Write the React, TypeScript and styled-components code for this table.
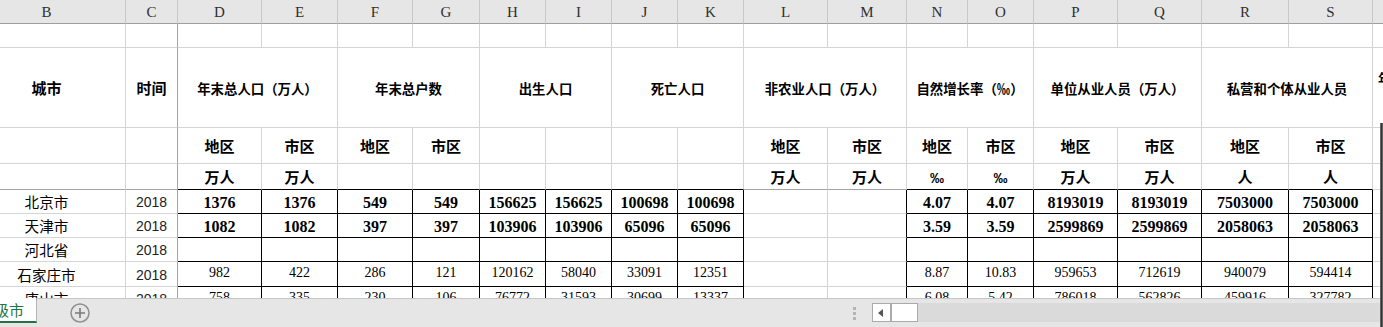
import styled, { createGlobalStyle, css } from 'styled-components';

const GlobalStyle = createGlobalStyle`
  html, body { margin: 0; padding: 0; background: #fff; overflow: hidden; }
  #root { width: 1383px; height: 327px; }
`;

// column widths B..T, column B is scrolled partly out of view
const COLS = [158, 52, 84, 76, 75, 67, 66, 66, 66, 66, 84, 79, 61, 66, 84, 84, 87, 84, 80];
const LETTERS = ['B', 'C', 'D', 'E', 'F', 'G', 'H', 'I', 'J', 'K', 'L', 'M', 'N', 'O', 'P', 'Q', 'R', 'S', 'T'];
const ROWS = [24, 80, 36, 26, 24, 24, 24, 25, 24];

type Edge = 'grid' | 'line' | 'freeze';
type Kind = 'plain' | 'title' | 'group' | 'sub' | 'unit' | 'city' | 'year' | 'bold' | 'num' | 'corner';

const edgeColor: Record<Edge, string> = { grid: '#d4d4d4', line: '#000', freeze: '#a3a3a3' };

const cjk = `"Noto Sans CJK SC", sans-serif`;
const serif = `"Liberation Serif", "Times New Roman", serif`;

const kinds: Record<Kind, ReturnType<typeof css>> = {
  plain: css``,
  title: css`font: 700 15px ${cjk};`,
  group: css`font: 700 13.4px ${cjk};`,
  sub: css`font: 700 15px ${cjk};`,
  unit: css`font: 700 14px "Liberation Sans", Arial, sans-serif; padding-top: 2px;`,
  city: css`font: 400 14.6px ${cjk};`,
  year: css`font: 400 14px "Liberation Sans", Arial, sans-serif; color: #222; padding-top: 1px;`,
  bold: css`font: 700 16px ${serif}; padding-top: 3px;`,
  num: css`font: 400 14px ${serif}; padding-bottom: 2px;`,
  corner: css`font: 700 13.4px ${cjk}; justify-content: flex-start; align-items: flex-start; padding: 20px 0 0 5px;`,
};

type CellDef = { text?: string; span?: number; kind?: Kind };

const Root = styled.div`
  position: relative;
  width: 1383px;
  height: 327px;
  display: flex;
  flex-direction: column;
  overflow: hidden;
  background: #fff;
`;

const SheetArea = styled.div`
  height: 298px;
  overflow: hidden;
`;

const Sheet = styled.div`
  margin-left: -32px;
  display: grid;
  grid-template-columns: ${COLS.map((w) => `${w}px`).join(' ')};
  grid-template-rows: 24px ${ROWS.map((h) => `${h}px`).join(' ')};
`;

const ColumnLabel = styled.div`
  box-sizing: border-box;
  background: #e6e6e6;
  border-right: 1px solid #c8c8c8;
  border-bottom: 1px solid #9e9e9e;
  display: flex;
  align-items: center;
  justify-content: center;
  padding-top: 2px;
  font: 400 15px ${serif};
  color: #2f2f2f;
`;

const Cell = styled.div<{ $right: Edge; $bottom: Edge; $span: number; $kind: Kind }>`
  box-sizing: border-box;
  grid-column: span ${(p) => p.$span};
  border-right: 1px solid ${(p) => edgeColor[p.$right]};
  border-bottom: 1px solid ${(p) => edgeColor[p.$bottom]};
  display: flex;
  align-items: center;
  justify-content: center;
  white-space: nowrap;
  overflow: hidden;
  color: #000;
  ${(p) => kinds[p.$kind]}
`;

const TabBar = styled.div`
  box-sizing: border-box;
  height: 29px;
  background: #e6e6e6;
  border-top: 1px solid #c6c6c6;
  display: flex;
  align-items: flex-start;
`;

const SheetTab = styled.div`
  box-sizing: border-box;
  width: 37px;
  height: 25px;
  margin-top: -1px;
  background: #fff;
  border-right: 1px solid #b4b4b4;
  border-bottom: 2px solid #217346;
  overflow: hidden;
  display: flex;
  align-items: center;
`;

const TabLabel = styled.span`
  margin-left: -6px;
  font: 400 15px ${cjk};
  color: #217346;
  white-space: nowrap;
`;

const AddSheet = styled.div`
  margin: 4px 0 0 33px;
  width: 20px;
  height: 20px;
`;

const ScrollArea = styled.div`
  margin-left: auto;
  width: 530px;
  display: flex;
  align-items: flex-start;
`;

const Grip = styled.div`
  margin-top: 8px;
  width: 3px;
  display: flex;
  flex-direction: column;
  gap: 2px;
  span { display: block; width: 3px; height: 3px; background: #b4b4b4; }
`;

const HScroll = styled.div`
  margin: 4px 0 0 16px;
  flex: 1;
  height: 19px;
  display: flex;
  background: #dadada;
`;

const ScrollButton = styled.div<{ $width: number }>`
  box-sizing: border-box;
  width: ${(p) => p.$width}px;
  height: 19px;
  background: #fff;
  border: 1px solid #ababab;
  display: flex;
  align-items: center;
  justify-content: center;
`;

const LeftArrow = styled.span`
  width: 0;
  height: 0;
  margin-right: 3px;
  border-top: 4.5px solid transparent;
  border-bottom: 4.5px solid transparent;
  border-right: 5px solid #555;
`;

const WindowEdge = styled.div`
  position: absolute;
  top: 123px;
  right: 0;
  bottom: 0;
  width: 3px;
  background: linear-gradient(90deg, #9a9a9a 0, #333 33%, #333 66%, #8c8c8c 100%);
`;

const inBox = (c: number) => (c >= 2 && c <= 9) || (c >= 12 && c <= 17);

const rows: CellDef[][] = [
  Array.from({ length: 19 }, () => ({})),
  [
    { text: '城市', kind: 'title' },
    { text: '时间', kind: 'title' },
    { text: '年末总人口（万人）', span: 2, kind: 'group' },
    { text: '年末总户数', span: 2, kind: 'group' },
    { text: '出生人口', span: 2, kind: 'group' },
    { text: '死亡人口', span: 2, kind: 'group' },
    { text: '非农业人口（万人）', span: 2, kind: 'group' },
    { text: '自然增长率（‰）', span: 2, kind: 'group' },
    { text: '单位从业人员（万人）', span: 2, kind: 'group' },
    { text: '私营和个体从业人员', span: 2, kind: 'group' },
    { text: '年末单位', kind: 'corner' },
  ],
  ['', '', '地区', '市区', '地区', '市区', '', '', '', '', '地区', '市区', '地区', '市区', '地区', '市区', '地区', '市区', ''].map(
    (t) => ({ text: t, kind: 'sub' as Kind }),
  ),
  ['', '', '万人', '万人', '', '', '', '', '', '', '万人', '万人', '‰', '‰', '万人', '万人', '人', '人', ''].map((t) => ({
    text: t,
    kind: (t === '‰' ? 'unit' : 'sub') as Kind,
  })),
];

const cities: [string, string[], boolean][] = [
  ['北京市', ['1376', '1376', '549', '549', '156625', '156625', '100698', '100698', '', '', '4.07', '4.07', '8193019', '8193019', '7503000', '7503000'], true],
  ['天津市', ['1082', '1082', '397', '397', '103906', '103906', '65096', '65096', '', '', '3.59', '3.59', '2599869', '2599869', '2058063', '2058063'], true],
  ['河北省', Array(16).fill(''), true],
  ['石家庄市', ['982', '422', '286', '121', '120162', '58040', '33091', '12351', '', '', '8.87', '10.83', '959653', '712619', '940079', '594414'], false],
  ['唐山市', ['758', '335', '230', '106', '76772', '31593', '30699', '13337', '', '', '6.08', '5.42', '786018', '562826', '459916', '327782'], false],
];

cities.forEach(([city, values, bold]) => {
  rows.push([
    { text: city, kind: 'city' },
    { text: '2018', kind: 'year' },
    ...values.map((v) => ({ text: v, kind: (bold ? 'bold' : 'num') as Kind })),
    {},
  ]);
});

const rightEdge = (r: number, c: number): Edge => {
  if (c === 1) return 'freeze';
  if (r >= 4 && (inBox(c) || c === 11)) return 'line';
  return 'grid';
};

const bottomEdge = (r: number, c: number): Edge => {
  if (r === 3) return inBox(c) ? 'line' : c <= 1 || c === 10 || c === 11 ? 'freeze' : 'grid';
  if (r >= 4 && inBox(c)) return 'line';
  return 'grid';
};

const SheetRow = ({ cells, r }: { cells: CellDef[]; r: number }) => {
  let col = 0;
  return (
    <>
      {cells.map((cell, i) => {
        const span = cell.span ?? 1;
        const start = col;
        col += span;
        const last = start + span - 1;
        return (
          <Cell
            key={i}
            $span={span}
            $kind={cell.kind ?? 'plain'}
            $right={rightEdge(r, last)}
            $bottom={bottomEdge(r, start)}
          >
            {cell.text}
          </Cell>
        );
      })}
    </>
  );
};

const App = () => (
  <Root>
    <GlobalStyle />
    <SheetArea>
      <Sheet>
        {LETTERS.map((l) => (
          <ColumnLabel key={l}>{l}</ColumnLabel>
        ))}
        {rows.map((cells, r) => (
          <SheetRow key={r} cells={cells} r={r} />
        ))}
      </Sheet>
    </SheetArea>
    <TabBar>
      <SheetTab>
        <TabLabel>级市</TabLabel>
      </SheetTab>
      <AddSheet>
        <svg width="20" height="20" viewBox="0 0 20 20">
          <circle cx="10" cy="10" r="9" fill="none" stroke="#8f8f8f" strokeWidth="1.5" />
          <path d="M10 5v10M5 10h10" stroke="#7a7a7a" strokeWidth="1.6" />
        </svg>
      </AddSheet>
      <ScrollArea>
        <Grip>
          <span />
          <span />
          <span />
        </Grip>
        <HScroll>
          <ScrollButton $width={19}>
            <LeftArrow />
          </ScrollButton>
          <ScrollButton $width={27} />
        </HScroll>
      </ScrollArea>
    </TabBar>
    <WindowEdge />
  </Root>
);

export default App;
